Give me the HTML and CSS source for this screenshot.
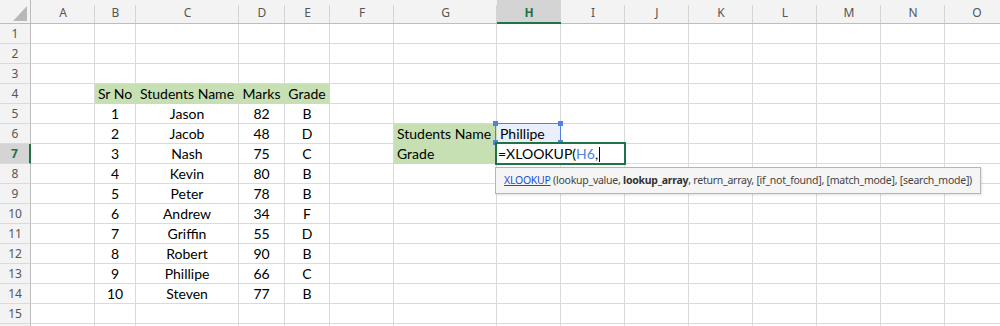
FILE: index.html
```html
<!DOCTYPE html>
<html lang="en">
<head>
    <meta charset="UTF-8">
    <meta name="viewport" content="width=device-width, initial-scale=1.0">
    <title>Students Grade Lookup</title>
    <link rel="stylesheet" href="styles.css">
</head>
<body>

    <div class="workbook">
        <div class="sheet" id="sheet">
            <!-- Cells will be inserted here -->
        </div>

        <!-- Reference highlight for H6 -->
        <div class="ref-box">
            <span class="handle tl"></span>
            <span class="handle tr"></span>
            <span class="handle bl"></span>
            <span class="handle br"></span>
        </div>

        <!-- Cell being edited (H7) -->
        <div class="editor">=XLOOKUP(<span class="ref-text">H6</span>,<span class="caret"></span></div>

        <div class="tooltip">
            <a href="#">XLOOKUP</a> (lookup_value, <b>lookup_array</b>, return_array, [if_not_found], [match_mode], [search_mode])
        </div>
    </div>

    <script>
        const letters = "ABCDEFGHIJKLMNO".split("");
        const rowCount = 16;
        const lastLabelledRow = 15; // row 16 only peeks in at the bottom edge

        const students = [
            ["Jason", 82, "B"],
            ["Jacob", 48, "D"],
            ["Nash", 75, "C"],
            ["Kevin", 80, "B"],
            ["Peter", 78, "B"],
            ["Andrew", 34, "F"],
            ["Griffin", 55, "D"],
            ["Robert", 90, "B"],
            ["Phillipe", 66, "C"],
            ["Steven", 77, "B"]
        ];

        const values = { B4: "Sr No", C4: "Students Name", D4: "Marks", E4: "Grade" };
        students.forEach((s, i) => {
            const r = 5 + i;
            values["B" + r] = i + 1;
            values["C" + r] = s[0];
            values["D" + r] = s[1];
            values["E" + r] = s[2];
        });
        values.G6 = "Students Name";
        values.G7 = "Grade";
        values.H6 = "Phillipe";

        const filled = ["B4", "C4", "D4", "E4", "G6", "G7"];
        const activeCol = "H";
        const activeRow = 7;

        const sheet = document.getElementById("sheet");

        function addCell(className, text) {
            const div = document.createElement("div");
            div.className = className;
            if (text !== undefined) div.textContent = text;
            sheet.appendChild(div);
        }

        // Column headers
        addCell("corner");
        letters.forEach(l => addCell("col-head" + (l === activeCol ? " active" : ""), l));

        // Rows
        for (let r = 1; r <= rowCount; r++) {
            addCell("row-head" + (r === activeRow ? " active" : ""), r <= lastLabelledRow ? r : undefined);
            letters.forEach(l => {
                const ref = l + r;
                let cls = "cell";
                if ("BCDE".includes(l) && r >= 4 && r <= 14) cls += " center";
                if (filled.includes(ref)) cls += " fill";
                if (ref === "H6") cls += " referenced";
                addCell(cls, values[ref]);
            });
        }
    </script>

</body>
</html>
```

FILE: styles.css
```css
/* Page */
body {
    margin: 0;
    background-color: #fff;
    overflow: hidden;
    font-family: "Lato", "Liberation Sans", sans-serif;
}

.workbook {
    position: relative;
    width: 1000px;
    height: 326px;
    overflow: hidden;
}

/* Grid */
.sheet {
    display: grid;
    grid-template-columns: 31px 64px 41px 103px 46px 45px 64px 103px repeat(8, 64px);
    grid-template-rows: 24px repeat(16, 20px);
}

.cell {
    box-sizing: border-box;
    border-right: 1px solid #dadada;
    border-bottom: 1px solid #dadada;
    padding: 0 3px;
    font-size: 14px;
    line-height: 19px;
    color: #000;
    white-space: nowrap;
}

.cell.center {
    text-align: center;
    padding: 0;
}

.cell.fill {
    background-color: #c6e0b4;
    border-color: #c6e0b4;
}

.cell.referenced {
    background-color: #e9effb;
}

/* Headers */
.corner {
    position: relative;
    box-sizing: border-box;
    background-color: #f3f3f3;
    border-right: 1px solid #bdbdbd;
    border-bottom: 1px solid #bdbdbd;
}

.corner::after {
    content: "";
    position: absolute;
    right: 3px;
    bottom: 2px;
    width: 14px;
    height: 15px;
    background-color: #b8b8b8;
    clip-path: polygon(100% 0, 100% 100%, 0 100%);
}

.col-head {
    position: relative;
    box-sizing: border-box;
    background-color: #f3f3f3;
    border-bottom: 1px solid #bdbdbd;
    padding-top: 2px;
    font-family: "Noto Sans", sans-serif;
    font-size: 12px;
    line-height: 22px;
    color: #555;
    text-align: center;
}

.col-head::after {
    content: "";
    position: absolute;
    top: 5px;
    right: 0;
    bottom: 0;
    width: 1px;
    background-color: #d4d4d4;
}

.col-head.active {
    background-color: #d4d4d4;
    border-bottom: 2px solid #217346;
    color: #217346;
    font-weight: 700;
}

.row-head {
    box-sizing: border-box;
    background-color: #f3f3f3;
    border-right: 1px solid #bdbdbd;
    border-bottom: 1px solid #dadada;
    font-family: "Noto Sans", sans-serif;
    font-size: 12px;
    line-height: 19px;
    color: #555;
    text-align: center;
}

.row-head.active {
    background-color: #d4d4d4;
    border-right: 2px solid #217346;
    color: #217346;
    font-weight: 700;
}

/* Formula reference and editor */
.ref-box {
    position: absolute;
    left: 495px;
    top: 123px;
    width: 66px;
    height: 20px;
    box-sizing: border-box;
    border: 1px solid #4f81e8;
}

.handle {
    position: absolute;
    width: 5px;
    height: 5px;
    background-color: #4f81e8;
}

.handle.tl { left: -3px; top: -3px; }
.handle.tr { right: -3px; top: -3px; }
.handle.bl { left: -3px; bottom: -3px; }
.handle.br { right: -3px; bottom: -3px; }

.editor {
    position: absolute;
    left: 495px;
    top: 142px;
    width: 131px;
    height: 23px;
    box-sizing: border-box;
    border: 2px solid #217346;
    background-color: #fff;
    padding-left: 1px;
    font-size: 14px;
    line-height: 19px;
    color: #000;
    white-space: nowrap;
}

.ref-text {
    color: #4f81e8;
}

.caret {
    display: inline-block;
    width: 1px;
    height: 15px;
    margin-left: 1px;
    background-color: #000;
    vertical-align: -3px;
}

/* Function tooltip */
.tooltip {
    position: absolute;
    left: 495px;
    top: 167px;
    width: 486px;
    height: 27px;
    box-sizing: border-box;
    border: 1px solid #b6b6b6;
    background-color: #f5f5f5;
    box-shadow: 1px 1px 2px rgba(0, 0, 0, 0.12);
    padding-left: 8px;
    font-family: "Noto Sans", sans-serif;
    font-size: 10.5px;
    letter-spacing: -0.25px;
    line-height: 25px;
    color: #444;
    white-space: nowrap;
}

.tooltip a {
    color: #1a52d6;
    text-decoration: underline;
}

.tooltip b {
    font-weight: 700;
    color: #333;
}
```
